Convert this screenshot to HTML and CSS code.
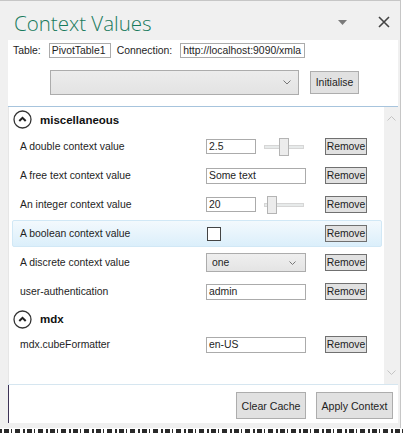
FILE: index.html
```html
<!DOCTYPE html>
<html>
<head>
<meta charset="utf-8">
<link rel="stylesheet" href="styles.css">
</head>
<body>
<div class="screen">
  <div class="window">
    <div class="titlebar">
      <div class="title">Context Values</div>
      <div class="title-tools">
        <svg class="tb-menu" width="9" height="5" viewBox="0 0 9 5"><path d="M0 0H9L4.5 5Z" fill="#7a7a7a"/></svg>
        <svg class="tb-close" width="12" height="12" viewBox="0 0 12 12"><path d="M1 1L11 11M11 1L1 11" stroke="#444" stroke-width="1.6"/></svg>
      </div>
    </div>
    <div class="pane">
      <div class="conn-row">
        <span class="lbl">Table:</span>
        <span class="box box-table">PivotTable1</span>
        <span class="lbl">Connection:</span>
        <span class="box box-conn">http://localhost:9090/xmla</span>
      </div>
      <div class="init-row">
        <div class="combo-big">
          <svg width="8" height="5" viewBox="0 0 8 5"><path d="M0.5 0.5L4 4L7.5 0.5" fill="none" stroke="#777" stroke-width="1"/></svg>
        </div>
        <div class="btn btn-init">Initialise</div>
      </div>
      <div class="scroll">
        <div class="list">
          <div class="group-head">
            <svg class="chev" width="19" height="19" viewBox="0 0 19 19"><circle cx="9.5" cy="9.5" r="8.5" fill="none" stroke="#333" stroke-width="1.3"/><path d="M6.3 11L9.5 7.8L12.7 11" fill="none" stroke="#222" stroke-width="2"/></svg>
            <span class="group-name">miscellaneous</span>
          </div>
          <div class="row">
            <span class="row-label">A double context value</span>
            <div class="ctl">
              <span class="box box-num">2.5</span>
              <div class="slider"><div class="track"></div><div class="thumb thumb-mid"></div></div>
            </div>
            <div class="btn btn-remove">Remove</div>
          </div>
          <div class="row">
            <span class="row-label">A free text context value</span>
            <div class="ctl"><span class="box box-wide">Some text</span></div>
            <div class="btn btn-remove">Remove</div>
          </div>
          <div class="row">
            <span class="row-label">An integer context value</span>
            <div class="ctl">
              <span class="box box-num">20</span>
              <div class="slider"><div class="track"></div><div class="thumb thumb-low"></div></div>
            </div>
            <div class="btn btn-remove">Remove</div>
          </div>
          <div class="row row-hover">
            <span class="row-label">A boolean context value</span>
            <div class="ctl"><span class="check"></span></div>
            <div class="btn btn-remove">Remove</div>
          </div>
          <div class="row">
            <span class="row-label">A discrete context value</span>
            <div class="ctl">
              <div class="combo-small"><span>one</span>
                <svg width="7" height="4" viewBox="0 0 7 4"><path d="M0.5 0.5L3.5 3.5L6.5 0.5" fill="none" stroke="#777" stroke-width="1"/></svg>
              </div>
            </div>
            <div class="btn btn-remove">Remove</div>
          </div>
          <div class="row">
            <span class="row-label">user-authentication</span>
            <div class="ctl"><span class="box box-wide">admin</span></div>
            <div class="btn btn-remove">Remove</div>
          </div>
          <div class="group-head group-head-2">
            <svg class="chev" width="19" height="19" viewBox="0 0 19 19"><circle cx="9.5" cy="9.5" r="8.5" fill="none" stroke="#333" stroke-width="1.3"/><path d="M6.3 11L9.5 7.8L12.7 11" fill="none" stroke="#222" stroke-width="2"/></svg>
            <span class="group-name">mdx</span>
          </div>
          <div class="row">
            <span class="row-label">mdx.cubeFormatter</span>
            <div class="ctl"><span class="box box-wide">en-US</span></div>
            <div class="btn btn-remove">Remove</div>
          </div>
        </div>
        <div class="scrollbar">
          <svg width="9" height="5" viewBox="0 0 9 5"><path d="M0.5 4.5L4.5 0.5L8.5 4.5" fill="none" stroke="#c4c4c4" stroke-width="1"/></svg>
          <svg width="9" height="5" viewBox="0 0 9 5"><path d="M0.5 0.5L4.5 4.5L8.5 0.5" fill="none" stroke="#c4c4c4" stroke-width="1"/></svg>
        </div>
      </div>
      <div class="actions">
        <div class="btn btn-action btn-clear">Clear Cache</div>
        <div class="btn btn-action btn-apply">Apply Context</div>
      </div>
    </div>
  </div>
  <div class="behind"></div>
</div>
</body>
</html>
```
FILE: styles.css
```css
* { box-sizing: border-box; }
html, body { margin: 0; padding: 0; background: #ffffff; }
body { font-family: "Liberation Sans", Arial, sans-serif; font-size: 10.4px; color: #1e1e1e; }

.screen { width: 405px; height: 433px; overflow: hidden; background: #fff; }

.window {
  width: 401px; height: 428px;
  background: #f0f0f0;
  border-top: 1px solid #c6c6c6;
  border-right: 1px solid #c6c6c6;
  display: flex; flex-direction: column;
}

.titlebar {
  height: 39px;
  display: flex; align-items: center; justify-content: space-between;
  padding: 3px 0 0 14px;
}
.title {
  font-family: "Open Sans", "Noto Sans", sans-serif;
  font-weight: 300;
  font-size: 20.5px;
  color: #177a5c;
  margin-top: 2px;
}
.title-tools { display: flex; align-items: center; gap: 31px; padding-right: 10px; }
.tb-menu { margin-top: 1px; }

.pane {
  margin-left: 8px;
  width: 390px;
  height: 383px;
  background: #ffffff;
  display: flex; flex-direction: column;
}

.conn-row {
  display: flex; align-items: center;
  height: 16px; margin-top: 2px;
  padding-left: 5px;
}
.lbl { margin-right: 8px; }
.lbl + .box + .lbl { margin-left: -1px; }
.box {
  display: inline-flex; align-items: center;
  height: 15px; padding-left: 2px;
  border: 1px solid #ababab; background: #fff;
  white-space: nowrap; overflow: hidden;
}
.box-table { width: 62px; margin-right: 7px; }
.box-conn { width: 125px; }

.init-row {
  display: flex; align-items: center;
  height: 25px; margin-top: 12px;
  padding-left: 42px;
}
.combo-big {
  width: 249px; height: 25px;
  border: 1px solid #acacac;
  background: linear-gradient(#ececec, #e3e3e3);
  display: flex; align-items: center; justify-content: flex-end;
  padding-right: 7px;
}
.btn {
  display: flex; align-items: center; justify-content: center;
  background: #e1e1e1;
  border: 1px solid #adadad;
  white-space: nowrap;
}
.btn-init { width: 49px; height: 23px; margin-left: 11px; }

.scroll {
  margin-top: 11px;
  height: 279px;
  display: flex;
  border-top: 1px solid #a7c4dd;
  border-bottom: 1px solid #d6e6f0;
}
.list {
  width: 376px;
  border-left: 1px solid #e6e6e6;
  padding-left: 3px;
  display: flex; flex-direction: column;
}
.scrollbar {
  width: 14px;
  background: #f0f0f0;
  display: flex; flex-direction: column; align-items: center; justify-content: space-between;
  padding: 9px 0 9px 0;
}

.group-head {
  height: 25px;
  display: flex; align-items: center;
  padding-left: 1px;
}
.group-head-2 { height: 22px; margin-top: 2px; }
.chev { display: block; }
.group-name { font-weight: bold; font-size: 11.5px; margin-left: 8px; color: #111; }

.row {
  height: 27px; margin: 1px 0;
  width: 370px;
  display: flex; align-items: center;
  padding-left: 7px;
  border: 1px solid transparent;
  border-radius: 2px;
}
.row-hover {
  background: linear-gradient(#f3f9fd, #dbeffb);
  border-color: #d1e8f6;
}
.row-label { width: 186px; }
.ctl { width: 119px; display: flex; align-items: center; }
.box-num { width: 50px; }
.box-wide { width: 100px; height: 16px; }
.btn-remove { width: 42px; height: 17px; border-color: #707070; }

.slider { position: relative; width: 40px; height: 18px; margin-left: 8px; }
.track {
  position: absolute; left: 0; right: 0; top: 7px; height: 4px;
  background: #e7eaea; border: 1px solid #d6d6d6;
}
.thumb {
  position: absolute; top: 0; width: 10px; height: 18px;
  background: #ececec; border: 1px solid #b4b4b4;
}
.thumb-mid { left: 15px; }
.thumb-low { left: 3px; }

.check {
  width: 14px; height: 14px; margin-left: 1px;
  border: 1px solid #444; background: #fff;
}
.combo-small {
  width: 100px; height: 19px;
  border: 1px solid #acacac;
  background: linear-gradient(#efefef, #e4e4e4);
  display: flex; align-items: center; justify-content: space-between;
  padding: 0 9px 0 5px;
}

.actions {
  flex: 1;
  border-left: 1px solid #3d3357;
  display: flex; justify-content: flex-end; align-items: flex-start;
  gap: 10px;
  padding: 7px 5px 0 0;
}
.btn-action { height: 27px; font-size: 10.6px; }
.btn-clear { width: 70px; }
.btn-apply { width: 77px; }

.behind {
  height: 5px;
  margin-top: 1px;
  background:
    repeating-linear-gradient(90deg,
      #2a2a2a 0 2px, transparent 2px 4px,
      #2a2a2a 4px 9px, transparent 9px 11px,
      #2a2a2a 11px 12px, transparent 12px 15px,
      #2a2a2a 15px 20px, transparent 20px 23px);
}
```
